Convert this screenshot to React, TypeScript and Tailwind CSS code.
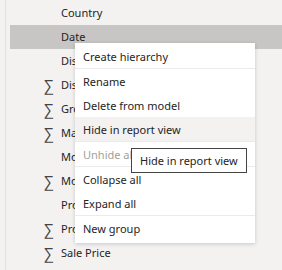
import React from "react";

const fields = [
  { name: "Country", sum: false },
  { name: "Date", sum: false, selected: true },
  { name: "Discount Band", sum: false },
  { name: "Discounts", sum: true },
  { name: "Gross Sales", sum: true },
  { name: "Manufacturing Price", sum: true },
  { name: "Month Name", sum: false },
  { name: "Month Number", sum: true },
  { name: "Product", sum: false },
  { name: "Profit", sum: true },
  { name: "Sale Price", sum: true },
];

const menu = [
  { label: "Create hierarchy", sep: true },
  { label: "Rename" },
  { label: "Delete from model" },
  { label: "Hide in report view", hover: true, sep: true },
  { label: "Unhide all", disabled: true, sep: true },
  { label: "Collapse all" },
  { label: "Expand all", sep: true },
  { label: "New group" },
];

const Sigma = () => <span className="w-[17px] text-[15px] leading-none text-[#444]">∑</span>;

const App = () => {
  return (
    <div className="relative w-[282px] h-[270px] overflow-hidden bg-[#f3f2f1] text-[11px] text-[#252423]" style={{ fontFamily: '"Segoe UI", "Noto Sans", "Open Sans", sans-serif' }}>
      <div className="absolute left-[5px] top-0 h-full w-px bg-[#e1dfdd]"></div>
      {/* field list */}
      <div className="flex flex-col pl-[10px] pt-[1px]">
        {fields.map((f) => (
          <div key={f.name} className={`flex items-center h-[24px] pl-[34px] pt-px ${f.selected ? "bg-[#c8c6c4]" : ""}`}>
            <div className="w-[17px] flex items-center">{f.sum && <Sigma />}</div>
            <span className="whitespace-nowrap">{f.name}</span>
          </div>
        ))}
      </div>
      {/* context menu */}
      <div className="absolute left-[75px] top-[43px] w-[180px] bg-white shadow-[0_1px_4px_rgba(0,0,0,0.18)] pt-[1px] pb-[3px]">
        {menu.map((m) => (
          <div key={m.label} className={m.sep ? "border-b border-[#edebe9]" : ""}>
            <div className={`flex items-center h-[24px] pl-[8px] pt-[2px] ${m.hover ? "bg-[#f3f2f1]" : ""} ${m.disabled ? "text-[#a19f9d]" : ""}`}>
              {m.label}
            </div>
          </div>
        ))}
      </div>
      {/* tooltip */}
      <div className="absolute left-[131px] top-[148px] w-[116px] h-[25px] pl-[8px] pt-px flex items-center bg-white border border-[#444] whitespace-nowrap">
        Hide in report view
      </div>
    </div>
  );
};

export default App;
